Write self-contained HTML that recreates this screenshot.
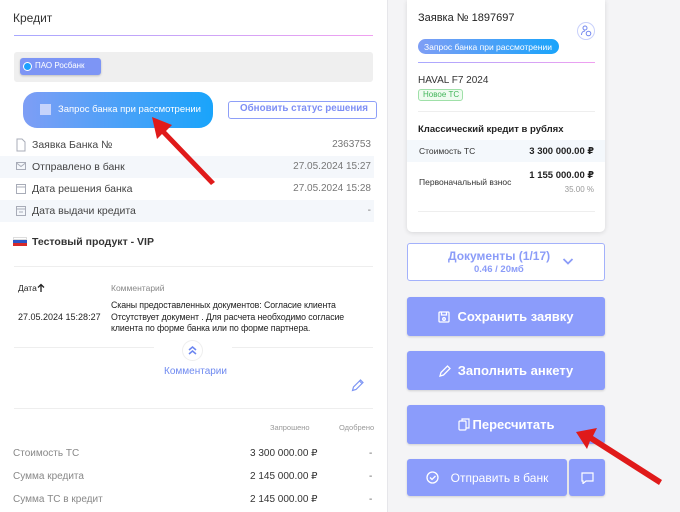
<!DOCTYPE html>
<html><head><meta charset="utf-8">
<style>
*{box-sizing:border-box;margin:0;padding:0}
body{width:680px;height:512px;overflow:hidden;background:#f4f4f6;font-family:"Liberation Sans","DejaVu Sans",sans-serif;position:relative;color:#333}
.a{position:absolute}
.left{left:0;top:0;width:388px;height:512px;background:#fff;border-right:1px solid #e6e6ea}
.t{font-size:11px;white-space:nowrap}
.row{position:absolute;left:0;width:374px;height:22px}
.btn{position:absolute;left:407px;width:198px;height:39px;background:#8b9cfb;border-radius:3px;color:#fff;font-weight:bold;font-size:13px;display:flex;align-items:center;justify-content:center;gap:7px;box-shadow:0 1px 2px rgba(0,0,0,.15)}
</style></head><body>
<div class="a left"></div>
<div class="a t" style="left:13px;top:11px;font-size:12px;color:#333">Кредит</div>
<div class="a" style="left:14px;top:35px;width:359px;height:1px;background:linear-gradient(90deg,#a8a8ff,#f0a0f0)"></div>
<div class="a" style="left:14px;top:52px;width:359px;height:30px;background:#efefef;border-radius:3px"></div>
<div class="a" style="left:20px;top:58px;width:81px;height:17px;background:#7d95f5;border-radius:3px;box-shadow:0 1px 2px rgba(0,0,0,.2)"></div>
<div class="a" style="left:23px;top:62px;width:9px;height:9px;border-radius:50%;background:#1aa0ff;border:1px solid #fff"></div>
<div class="a t" style="left:35px;top:61px;font-size:8px;color:#fff">ПАО Росбанк</div>
<div class="a" style="left:23px;top:92px;width:190px;height:36px;border-radius:14px;background:linear-gradient(90deg,#7e9ef5,#19a4fb)"></div>
<div class="a" style="left:40px;top:104px;width:11px;height:11px;background:#c6d3fb"></div>
<div class="a t" style="left:58px;top:104px;font-size:9.5px;color:#fff">Запрос банка при рассмотрении</div>
<div class="a" style="left:228px;top:101px;width:149px;height:18px;border:1px solid #8e9ff8;border-radius:3px"></div>
<div class="a t" style="left:240px;top:103px;font-size:9.8px;color:#7f8ff5;font-weight:bold">Обновить статус решения</div>

<div class="row" style="top:134px"></div>
<div class="row" style="top:156px;background:#f4f7fb"></div>
<div class="row" style="top:178px"></div>
<div class="row" style="top:200px;background:#f4f7fb"></div>
<svg class="a" style="left:15px;top:138px" width="12" height="84" fill="none" stroke="#a8acb8" stroke-width="1">
<path d="M2 1h5l3 3v9H2z"/>
<rect x="1.5" y="24.5" width="9" height="7"/><path d="M1.5 25l4.5 3.5 4.5-3.5"/>
<rect x="1.5" y="46.5" width="9" height="9"/><path d="M1.5 49h9"/>
<rect x="1.5" y="68.5" width="9" height="9"/><path d="M1.5 71h9M4 74h4"/>
</svg>
<div class="a t" style="left:32px;top:139px;color:#444;font-size:10.5px">Заявка Банка №</div>
<div class="a t" style="left:32px;top:161px;color:#444;font-size:10.5px">Отправлено в банк</div>
<div class="a t" style="left:32px;top:183px;color:#444;font-size:10.5px">Дата решения банка</div>
<div class="a t" style="left:32px;top:205px;color:#444;font-size:10.5px">Дата выдачи кредита</div>
<div class="a t" style="right:309px;top:139px;color:#777;font-size:10px">2363753</div>
<div class="a t" style="right:309px;top:161px;color:#777;font-size:10px">27.05.2024 15:27</div>
<div class="a t" style="right:309px;top:183px;color:#777;font-size:10px">27.05.2024 15:28</div>
<div class="a t" style="right:309px;top:205px;color:#777;font-size:10px">-</div>

<div class="a" style="left:13px;top:237px;width:14px;height:3px;background:#fff;border:1px solid #ddd"></div>
<div class="a" style="left:13px;top:240px;width:14px;height:3px;background:#2b56c6"></div>
<div class="a" style="left:13px;top:243px;width:14px;height:3px;background:#d62a2a"></div>
<div class="a t" style="left:32px;top:236px;font-weight:bold;font-size:10.5px;color:#333">Тестовый продукт - VIP</div>

<div class="a" style="left:14px;top:266px;width:359px;height:1px;background:#eee"></div>
<div class="a t" style="left:18px;top:283px;font-size:8.5px;color:#222">Дата</div>
<svg class="a" style="left:37px;top:283px" width="8" height="10" fill="none" stroke="#222" stroke-width="1.3"><path d="M4 9V1.5M1 4.5l3-3 3 3"/></svg>
<div class="a t" style="left:111px;top:283px;font-size:8.5px;color:#888">Комментарий</div>
<div class="a t" style="left:18px;top:312px;font-size:9px;color:#222">27.05.2024 15:28:27</div>
<div class="a" style="left:111px;top:300px;font-size:8.8px;line-height:11.5px;color:#222;width:260px;letter-spacing:-0.1px">Сканы предоставленных документов: Согласие клиента Отсутствует документ . Для расчета необходимо согласие клиента по форме банка или по форме партнера.</div>
<div class="a" style="left:14px;top:347px;width:140px;height:1px;background:#eee"></div>
<div class="a" style="left:232px;top:347px;width:141px;height:1px;background:#eee"></div>
<div class="a" style="left:182px;top:340px;width:21px;height:21px;border-radius:50%;border:1px solid #eee;background:#fff"></div>
<svg class="a" style="left:187px;top:345px" width="11" height="11" fill="none" stroke="#6b85f0" stroke-width="1.5"><path d="M2 5l3.5-3 3.5 3M2 9l3.5-3 3.5 3"/></svg>
<div class="a t" style="left:164px;top:366px;font-size:10px;color:#6f8af0">Комментарии</div>
<svg class="a" style="left:351px;top:379px" width="13" height="13" fill="none" stroke="#7e96f4" stroke-width="1.2"><path d="M1.5 11.5l1-3.5 7-7 2.5 2.5-7 7zM8.5 2l2.5 2.5"/></svg>
<div class="a" style="left:14px;top:408px;width:359px;height:1px;background:#eee"></div>
<div class="a t" style="left:270px;top:423px;font-size:7.5px;color:#999">Запрошено</div>
<div class="a t" style="left:339px;top:423px;font-size:7.5px;color:#999">Одобрено</div>
<div class="a t" style="left:13px;top:448px;font-size:10px;color:#888">Стоимость ТС</div>
<div class="a t" style="left:13px;top:471px;font-size:10px;color:#888">Сумма кредита</div>
<div class="a t" style="left:13px;top:494px;font-size:10px;color:#888">Сумма ТС в кредит</div>
<div class="a t" style="left:250px;top:448px;font-size:10px;color:#333">3 300 000.00 ₽</div>
<div class="a t" style="left:250px;top:471px;font-size:10px;color:#333">2 145 000.00 ₽</div>
<div class="a t" style="left:250px;top:494px;font-size:10px;color:#333">2 145 000.00 ₽</div>
<div class="a t" style="left:369px;top:448px;font-size:10px;color:#666">-</div>
<div class="a t" style="left:369px;top:471px;font-size:10px;color:#666">-</div>
<div class="a t" style="left:369px;top:494px;font-size:10px;color:#666">-</div>

<div class="a" style="left:407px;top:0;width:198px;height:232px;background:#fff;border-radius:0 0 5px 5px;box-shadow:0 1px 5px rgba(0,0,0,.12)"></div>
<div class="a t" style="left:418px;top:12px;font-size:11px;color:#222">Заявка № 1897697</div>
<div class="a" style="left:577px;top:22px;width:18px;height:18px;border-radius:50%;border:1px solid #c8d0fb"></div>
<svg class="a" style="left:580px;top:25px" width="12" height="12" fill="none" stroke="#7388ef" stroke-width="1"><circle cx="5" cy="3" r="2"/><path d="M1.5 10c0-3 2-4 3.5-4"/><circle cx="8.5" cy="8.5" r="2.3"/></svg>
<div class="a" style="left:418px;top:39px;width:141px;height:15px;border-radius:8px;background:linear-gradient(90deg,#7e9ef5,#19a4fb)"></div>
<div class="a t" style="left:424px;top:42px;font-size:8.5px;color:#fff">Запрос банка при рассмотрении</div>
<div class="a" style="left:418px;top:62px;width:177px;height:1px;background:linear-gradient(90deg,#a8a8ff,#f0a0f0)"></div>
<div class="a t" style="left:418px;top:75px;font-size:10px;color:#333">HAVAL F7 2024</div>
<div class="a" style="left:418px;top:89px;width:45px;height:12px;border:1px solid #9fe0a8;border-radius:3px;background:#effbf0"></div>
<div class="a t" style="left:423px;top:90px;font-size:8px;color:#42b65a">Новое ТС</div>
<div class="a" style="left:418px;top:111px;width:177px;height:1px;background:#eee"></div>
<div class="a t" style="left:418px;top:124px;font-size:9.5px;color:#222;font-weight:bold">Классический кредит в рублях</div>
<div class="a" style="left:407px;top:140px;width:198px;height:22px;background:#f4f8fc"></div>
<div class="a t" style="left:419px;top:146px;font-size:8.5px;color:#333">Стоимость ТС</div>
<div class="a t" style="right:86px;top:146px;font-size:9.5px;color:#222;font-weight:bold">3 300 000.00 ₽</div>
<div class="a t" style="left:419px;top:177px;font-size:8.5px;color:#333">Первоначальный взнос</div>
<div class="a t" style="right:86px;top:170px;font-size:9.5px;color:#222;font-weight:bold">1 155 000.00 ₽</div>
<div class="a t" style="right:86px;top:185px;font-size:8px;color:#999">35.00 %</div>
<div class="a" style="left:418px;top:211px;width:177px;height:1px;background:#eee"></div>

<div class="a" style="left:407px;top:243px;width:198px;height:38px;border:1.5px solid #a3b1fb;border-radius:3px;background:#fff"></div>
<div class="a t" style="left:448px;top:249px;font-size:12px;font-weight:bold;color:#8b9cf8">Документы (1/17)</div>
<div class="a t" style="left:474px;top:264px;font-size:9.5px;font-weight:bold;color:#8b9cf8">0.46 / 20мб</div>
<svg class="a" style="left:562px;top:257px" width="12" height="9" fill="none" stroke="#8b9cf8" stroke-width="1.8"><path d="M1.5 2l4.5 4.5 4.5-4.5"/></svg>

<div class="btn" style="top:297px"><svg width="12" height="12" fill="none" stroke="#fff" stroke-width="1.3"><rect x="1" y="1" width="10" height="10" rx="1"/><path d="M3.5 1v3h5V1"/><circle cx="6" cy="8" r="1.3"/></svg>Сохранить заявку</div>
<div class="btn" style="top:351px"><svg width="12" height="12" fill="none" stroke="#fff" stroke-width="1.3"><path d="M1 11l1-3.5 6.5-6.5 2.5 2.5-6.5 6.5z"/></svg>Заполнить анкету</div>
<div class="btn" style="top:405px;gap:3px"><svg width="12" height="13" fill="none" stroke="#fff" stroke-width="1.2"><rect x="1" y="3" width="7" height="9" rx="1"/><path d="M4 3V1h7v9H8"/></svg>Пересчитать</div>
<div class="btn" style="top:459px;width:160px;height:37px;font-weight:normal;font-size:12px;gap:12px"><svg width="13" height="13" fill="none" stroke="#fff" stroke-width="1.3"><circle cx="6.5" cy="6.5" r="5.5"/><path d="M4 6.5l2 2 3.5-3.5"/></svg>Отправить в банк</div>
<div class="btn" style="top:459px;left:569px;width:36px;height:37px"><svg width="13" height="12" fill="none" stroke="#fff" stroke-width="1.2"><path d="M1 1h11v8H5l-3 2.5V9H1z"/></svg></div>

<svg class="a" style="left:0;top:0" width="680" height="512">
<path d="M152 117 L172 125 L166 131 L215 182 L211 185 L162 134 L157 139 Z" fill="#e01a1a"/>
<path d="M576 432 L597 428 L593 436 L662 480 L659 485 L590 441 L587 449 Z" fill="#e01a1a"/>
</svg>
</body></html>
